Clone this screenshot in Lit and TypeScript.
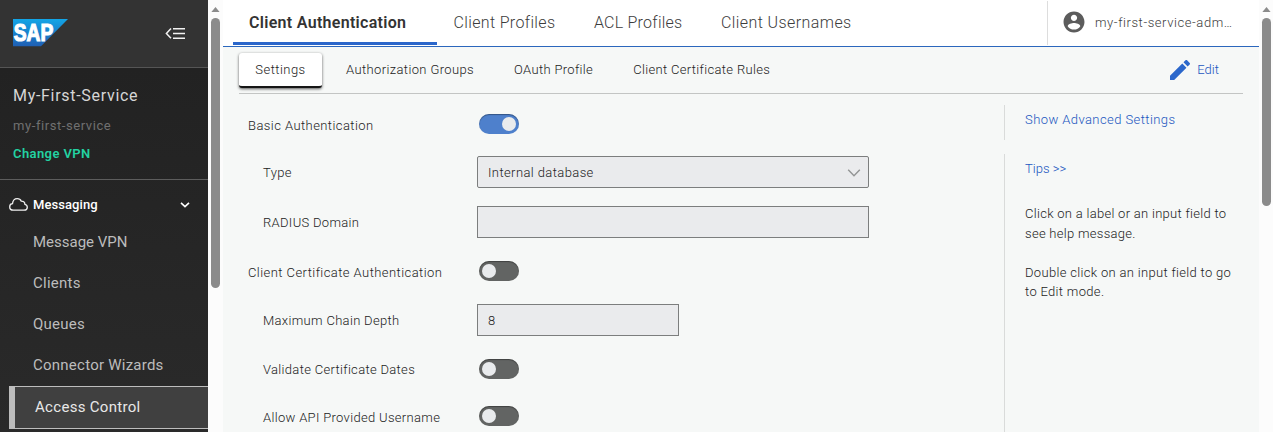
import { LitElement, html, css } from "lit";
import { customElement, property } from "lit/decorators.js";
import { classMap } from "lit/directives/class-map.js";

@customElement("scroll-rail")
class ScrollRail extends LitElement {
  @property({ type: Number }) thumb = 100;
  static styles = css`
    :host { display: flex; flex-direction: column; align-items: center; background: #fcfcfc; height: 432px; box-sizing: border-box; padding-top: 7px; }
    svg { display: block; width: 9px; height: 5px; margin-bottom: 6px; }
    .thumb { width: 9px; border-radius: 5px; background: #8b8b8b; }
  `;
  render() {
    return html`<svg viewBox="0 0 9 5"><path d="M4.5 0 8.6 5H.4z" fill="#8b8b8b" /></svg>
      <div class="thumb" style="height:${this.thumb}px"></div>`;
  }
}

@customElement("toggle-switch")
class ToggleSwitch extends LitElement {
  @property({ type: Boolean }) on = false;
  static styles = css`
    :host { display: block; }
    .track { width: 40px; height: 20px; border-radius: 10px; box-sizing: border-box; padding: 3px; display: flex; background: #626463; box-shadow: inset 0 1px 1px rgba(0, 0, 0, 0.35); }
    .track.on { background: #4e80cc; justify-content: flex-end; }
    .knob { width: 14px; height: 14px; border-radius: 50%; background: #e9ebed; }
  `;
  render() {
    return html`<div class=${classMap({ track: true, on: this.on })}><div class="knob"></div></div>`;
  }
}

@customElement("nav-sidebar")
class NavSidebar extends LitElement {
  static styles = css`
    :host { display: flex; flex-direction: column; width: 208px; height: 432px; background: linear-gradient(#222222 68px, #2a2a2a); overflow: hidden; color: #bcbcbc; }
    svg { display: block; }
    .brand { height: 48px; border-bottom: 1px solid #555; background: #333; display: flex; justify-content: space-between; padding: 19px 22px 0 13px; }
    .menu { margin-top: 9px; }
    .service { height: 111px; border-bottom: 1px solid #5d5d5d; padding-left: 13px; }
    .title { font-size: 16px; line-height: 20px; padding-top: 18px; color: #d6d6d6; letter-spacing: 0.7px; }
    .vpn { font-size: 13px; line-height: 18px; padding-top: 11px; color: #707070; letter-spacing: 0.58px; }
    .change { font-size: 13px; line-height: 18px; padding-top: 10px; color: #23d2a2; font-weight: 600; letter-spacing: 0.4px; }
    .group { height: 35px; padding: 7px 18px 0 9px; display: flex; align-items: center; color: #fff; font-size: 13px; font-weight: 500; letter-spacing: 0.07px; }
    .group span { flex: 1; padding-left: 5px; }
    .item { height: 41px; line-height: 41px; padding-left: 33px; font-size: 15px; letter-spacing: 0.24px; }
    .item.tight { letter-spacing: 0; }
    .active { margin-left: 9px; height: 41px; line-height: 41px; border: 1px solid #bdbdbd; border-left-width: 6px; border-right: 0; background: #404040; color: #e8e8e8; padding-left: 20px; font-size: 15px; letter-spacing: 0.3px; }
  `;
  render() {
    return html`
      <div class="brand">
        <svg width="55" height="28" viewBox="0 0 55 28">
          <defs><linearGradient id="g" x1="0" y1="0" x2="0" y2="1"><stop offset="0" stop-color="#13a5e6" /><stop offset="1" stop-color="#1f5fb4" /></linearGradient></defs>
          <path d="M0 0H55L28 27.3H0z" fill="url(#g)" />
          <text x="0.8" y="21.8" font-family="Liberation Sans" font-weight="700" font-size="23.500" fill="#fff" stroke="#fff" stroke-width="1.2" textLength="39.500" lengthAdjust="spacingAndGlyphs">SAP</text>
        </svg>
        <svg class="menu" width="21" height="12" viewBox="0 0 21 12" fill="none" stroke="#f2f2f2" stroke-width="1.5">
          <path d="M6 .500 1.400 5.400 6 10.300M8 .750h12M8 5.500h12M8 10.250h12" />
        </svg>
      </div>
      <div class="service">
        <div class="title">My-First-Service</div>
        <div class="vpn">my-first-service</div>
        <div class="change">Change VPN</div>
      </div>
      <div class="group">
        <svg width="19" height="13" viewBox="0 0 19 13" fill="none" stroke="#f0f0f0" stroke-width="1.3"><path d="M4.300 12.200C2 12.200.700 10.700.700 8.900.700 7 2 5.800 3.500 5.700 3.800 2.700 5.700.700 8.300.700c2 0 3.300 1 4 2.500 2.300 0 3.500 1.200 3.600 3.100 1.500.4 2.400 1.500 2.400 2.900 0 1.800-1.400 3-3.200 3z" /></svg>
        <span>Messaging</span>
        <svg width="10" height="6" viewBox="0 0 10 6" fill="none" stroke="#fff" stroke-width="1.6"><path d="M1 .8 5 4.600 9 .8" /></svg>
      </div>
      ${["Message VPN", "Clients", "Queues", "Connector Wizards"].map((t, i) => html`<div class=${classMap({ item: true, tight: i === 0 })}>${t}</div>`)}
      <div class="active">Access Control</div>
    `;
  }
}

@customElement("app-root")
class AppRoot extends LitElement {
  static styles = css`
    :host { display: grid; grid-template-columns: 208px 15px 1036px 14px; height: 432px; overflow: hidden; background: #f6f8f7; font-family: Roboto, "Noto Sans", sans-serif; font-size: 13px; color: #222; }
    svg { display: block; flex: none; }
    main { min-width: 0; font-weight: 300; }
    header { display: flex; height: 46px; background: #fff; border-bottom: 1px solid #2b67bd; padding-left: 10px; }
    .tab { font-size: 16px; line-height: 46px; height: 42px; color: #3c3c3c; letter-spacing: 0.35px; padding: 0 16px; margin-right: 6.500px; }
    .tab.t2 { letter-spacing: 0.25px; }
    .tab.t3 { letter-spacing: 0.42px; }
    .tab.sel { color: #333; font-weight: 600; border-bottom: 3px solid #2b67cb; letter-spacing: 0.3px; width: 172px; margin-right: 0.5px; }
    .user { margin-left: auto; width: 196px; height: 42px; margin-top: 1px; border-left: 1px solid #ddd; display: flex; align-items: center; padding: 0 0 2px 15px; gap: 10px; color: #3c3c3c; letter-spacing: 0.57px; }
    .sub { height: 46px; margin: 0 16px; border-bottom: 1px solid #c3c5c4; display: flex; align-items: flex-start; }
    .pill { height: 35px; line-height: 33px; margin-top: 6px; padding: 0 16px; margin-right: 8px; letter-spacing: 0.38px; }
    .pill.p2, .pill.p3 { letter-spacing: 0.33px; }
    .pill.sel { background: #fff; border-radius: 3px; height: 33px; padding: 0; width: 83px; text-align: center; border-bottom: 2px solid #161616; box-shadow: 0 1px 3px rgba(0, 0, 0, 0.65); letter-spacing: 0.45px; }
    .edit { margin-left: auto; margin-right: 24px; display: flex; gap: 7px; margin-top: 13px; line-height: 20px; color: #1a56c0; letter-spacing: 0.05px; }
    .body { display: flex; justify-content: space-between; }
    .form { padding: 6px 0 0 25px; display: grid; grid-template-columns: 229px 392px; grid-template-rows: 48px 48px 52px 46px 52px 46px 48px; align-items: center; }
    .label { letter-spacing: 0.43px; padding-top: 2px; }
    .label.child { padding-left: 15px; padding-top: 0; letter-spacing: 0.32px; }
    .label.last { padding-top: 2px; }
    toggle-switch { padding-left: 2px; }
    .field { box-sizing: border-box; height: 32px; border: 1px solid #7c7e7e; background: #eaebed; padding: 1px 7px 0 10px; display: flex; align-items: center; justify-content: space-between; letter-spacing: 0.4px; }
    .field.select { border-radius: 2px; }
    .field.short { width: 202px; padding-bottom: 1px; }
    aside { width: 255px; }
    .advanced { margin-top: 11px; height: 35px; line-height: 29px; border-left: 1px solid #d9dbda; padding-left: 20px; color: #1a56c0; letter-spacing: 0.42px; }
    .tips { margin-top: 14px; height: 290px; border-left: 1px solid #d9dbda; padding-left: 20px; line-height: 20px; letter-spacing: 0.29px; }
    .tips a { display: block; color: #1a56c0; padding: 4.500px 0 25px; letter-spacing: 0; }
    .tips p { margin: 0 0 19px; }
    .tips p + p { line-height: 19.500px; letter-spacing: 0.32px; }
  `;
  rows = [
    { label: "Basic Authentication", kind: "on" },
    { label: "Type", kind: "select", child: true },
    { label: "RADIUS Domain", kind: "text", child: true },
    { label: "Client Certificate Authentication", kind: "off" },
    { label: "Maximum Chain Depth", kind: "number", child: true },
    { label: "Validate Certificate Dates", kind: "off", child: true },
    { label: "Allow API Provided Username", kind: "off", child: true, last: true },
  ];
  control(kind: string) {
    if (kind === "select")
      return html`<div class="field select"><span>Internal database</span>
        <svg width="14" height="8" viewBox="0 0 14 8" fill="none" stroke="#929494" stroke-width="1.4"><path d="M1.200.8 7 6.800 12.800.8" /></svg></div>`;
    if (kind === "text") return html`<div class="field"></div>`;
    if (kind === "number") return html`<div class="field short">8</div>`;
    return html`<toggle-switch ?on=${kind === "on"}></toggle-switch>`;
  }
  render() {
    return html`
      <nav-sidebar></nav-sidebar>
      <scroll-rail .thumb=${270}></scroll-rail>
      <main>
        <header>
          <div class="tab sel">Client Authentication</div>
          <div class="tab t1">Client Profiles</div>
          <div class="tab t2">ACL Profiles</div>
          <div class="tab t3">Client Usernames</div>
          <div class="user">
            <svg width="22" height="22" viewBox="1.500 1.500 21 21"><path fill="#5c5c5c" d="M12 2C6.480 2 2 6.480 2 12s4.480 10 10 10 10-4.480 10-10S17.520 2 12 2zm0 3c1.660 0 3 1.340 3 3s-1.340 3-3 3-3-1.340-3-3 1.340-3 3-3zm0 14.200c-2.500 0-4.710-1.280-6-3.220.03-1.990 4-3.080 6-3.080 1.990 0 5.970 1.090 6 3.080-1.290 1.940-3.500 3.220-6 3.220z" /></svg>
            <span>my-first-service-adm…</span>
          </div>
        </header>
        <div class="sub">
          <div class="pill sel">Settings</div>
          <div class="pill p1">Authorization Groups</div>
          <div class="pill p2">OAuth Profile</div>
          <div class="pill p3">Client Certificate Rules</div>
          <div class="edit">
            <svg width="20" height="20" viewBox="3 3 18 18"><path fill="#2b67cb" d="M3 17.250V21h3.750L17.810 9.940l-3.750-3.750L3 17.250zM20.710 7.040c.39-.39.39-1.020 0-1.410l-2.340-2.340c-.39-.39-1.020-.39-1.410 0l-1.830 1.830 3.750 3.750 1.830-1.830z" /></svg>
            <span>Edit</span>
          </div>
        </div>
        <div class="body">
          <div class="form">
            ${this.rows.map((r) => html`<div class=${classMap({ label: true, child: !!r.child, last: !!r.last })}>${r.label}</div>${this.control(r.kind)}`)}
          </div>
          <aside>
            <div class="advanced">Show Advanced Settings</div>
            <div class="tips">
              <a>Tips &gt;&gt;</a>
              <p>Click on a label or an input field to<br />see help message.</p>
              <p>Double click on an input field to go<br />to Edit mode.</p>
            </div>
          </aside>
        </div>
      </main>
      <scroll-rail .thumb=${188}></scroll-rail>
    `;
  }
}
